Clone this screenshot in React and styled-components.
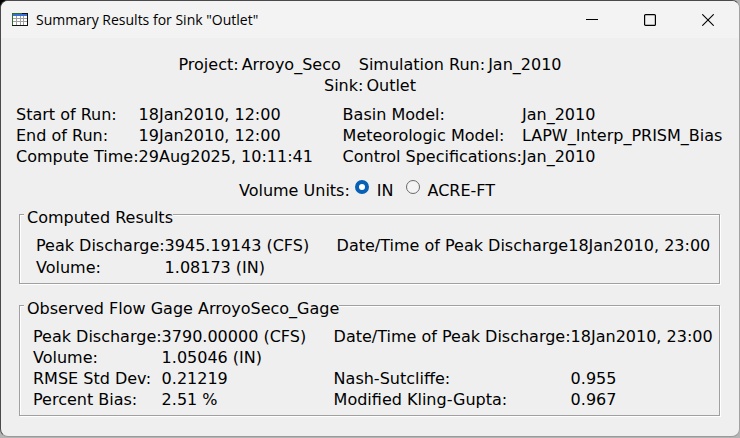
import React, { useState } from "react";
import styled, { createGlobalStyle } from "styled-components";

const GlobalStyle = createGlobalStyle`
  *, *::before, *::after {
    box-sizing: border-box;
  }
  body {
    margin: 0;
    background: #b4b4b4;
    color: #000;
    font-family: "DejaVu Sans", Verdana, sans-serif;
    font-size: 16px;
    line-height: 21px;
  }
`;

const Backdrop = styled.div`
  min-height: 100vh;
  display: flex;
  flex-direction: column;
  padding-bottom: 1px;
  background: linear-gradient(to right, #000 40px, transparent 40px) top / 100%
    20px no-repeat;
`;
const Window = styled.main`
  flex: 1;
  display: flex;
  flex-direction: column;
  overflow: hidden;
  border: 1px solid #4b494b;
  border-right-color: #a2a2a2;
  border-bottom-color: #9a9a9a;
  border-radius: 8px;
  background: #efefef;
`;
const TitleBar = styled.header`
  display: flex;
  align-items: center;
  height: 37px;
  padding: 0 2px 0 11px;
  background: #f3f3f3;
`;
const Title = styled.h1`
  flex: 1;
  margin: 0 0 0 8px;
  font-family: "Open Sans", "Noto Sans", sans-serif;
  font-size: 14px;
  font-weight: 400;
  white-space: nowrap;
`;
const WindowButton = styled.button`
  display: flex;
  align-items: center;
  justify-content: center;
  width: 58px;
  height: 37px;
  padding: 0;
  border: 0;
  background: transparent;
`;

const Content = styled.div`
  padding: 16px 15px;
`;
const Heading = styled.div`
  display: flex;
  justify-content: center;
  gap: 18px;
  white-space: nowrap;
`;
const Pair = styled.span`
  display: flex;
  gap: 3px;
`;
const Details = styled.dl`
  display: grid;
  grid-template-columns: ${({ $columns }) => $columns};
  row-gap: ${({ $rowGap }) => $rowGap || 0}px;
  margin: 0;
  white-space: nowrap;
`;
const RunDetails = styled(Details)`
  margin-top: 8px;
`;
const Term = styled.dt`
  grid-column: ${({ $column }) => $column};
`;
const Value = styled.dd`
  margin: 0;
`;

const Units = styled.div`
  display: flex;
  justify-content: center;
  margin-top: 13px;
  padding-right: 6px;
`;
const UnitLabel = styled.label`
  display: flex;
`;
const Radio = styled.input`
  appearance: none;
  width: 14px;
  height: 14px;
  margin: 0 8px 0 5px;
  border: 1px solid #6a6a6a;
  border-radius: 50%;
  background: #f4f4f4;

  &:checked {
    border: 4px solid #0560b6;
    background: #fff;
  }
  ${UnitLabel} + ${UnitLabel} & {
    margin-left: 12px;
  }
`;

const Group = styled.fieldset`
  min-width: 0;
  margin: ${({ $top }) => $top}px 4px 0 3px;
  padding: 13px 0 5px ${({ $inset }) => $inset}px;
  border: 1px solid #a0a0a0;
  box-shadow: inset 1px 1px 0 #fff, 1px 1px 0 #fff;
`;
const Legend = styled.legend`
  height: 15px;
  margin-left: ${({ $inset }) => 4 - $inset}px;
  padding: 0 0 0 3px;
  background: #efefef;
  white-space: nowrap;
`;

const TableIcon = () => (
  <svg width="16" height="14" viewBox="0 0 16 14" shapeRendering="crispEdges">
    <rect width="16" height="13" fill="#111" />
    <path d="M0 0H10V1H1V12H0Z" fill="#2f6b2a" />
    <rect x="1" y="1" width="14" height="2" fill="#3a6fd8" />
    <rect x="1" y="3" width="14" height="9" fill="#fff" />
    <path
      d="M1 5.5H15M1 8.5H15M4.5 3V12M8.5 3V12M11.5 3V12"
      stroke="#a0a0a0"
      fill="none"
    />
  </svg>
);

const units = ["IN", "ACRE-FT"];

const App = () => {
  const [unit, setUnit] = useState("IN");

  return (
    <>
      <GlobalStyle />
      <Backdrop>
        <Window>
          <TitleBar>
            <TableIcon />
            <Title>Summary Results for Sink "Outlet"</Title>
            <WindowButton type="button" aria-label="Minimize">
              <svg width="12" height="12" viewBox="0 0 12 12">
                <path d="M0 5.5H12" stroke="#000" />
              </svg>
            </WindowButton>
            <WindowButton type="button" aria-label="Maximize">
              <svg width="12" height="12" viewBox="0 0 12 12" fill="none">
                <rect
                  x="0.6"
                  y="0.6"
                  width="10.8"
                  height="10.8"
                  rx="1"
                  stroke="#000"
                  strokeWidth="1.2"
                />
              </svg>
            </WindowButton>
            <WindowButton type="button" aria-label="Close">
              <svg width="12" height="12" viewBox="0 0 12 12">
                <path
                  d="M0.3 0.3L11.7 11.7M11.7 0.3L0.3 11.7"
                  stroke="#000"
                  strokeWidth="1.1"
                />
              </svg>
            </WindowButton>
          </TitleBar>

          <Content>
            <Heading>
              <Pair>
                <span>Project:</span>
                <span>Arroyo_Seco</span>
              </Pair>
              <Pair>
                <span>Simulation Run:</span>
                <span>Jan_2010</span>
              </Pair>
            </Heading>
            <Heading>
              <Pair>
                <span>Sink:</span>
                <span>Outlet</span>
              </Pair>
            </Heading>

            <RunDetails $columns="max-content 204px max-content 1fr">
              <Term>Start of Run:</Term>
              <Value>18Jan2010, 12:00</Value>
              <Term>Basin Model:</Term>
              <Value>Jan_2010</Value>
              <Term>End of Run:</Term>
              <Value>19Jan2010, 12:00</Value>
              <Term>Meteorologic Model:</Term>
              <Value>LAPW_Interp_PRISM_Bias</Value>
              <Term>Compute Time:</Term>
              <Value>29Aug2025, 10:11:41</Value>
              <Term>Control Specifications:</Term>
              <Value>Jan_2010</Value>
            </RunDetails>

            <Units role="radiogroup" aria-labelledby="volume-units">
              <span id="volume-units">Volume Units:</span>
              {units.map((name) => (
                <UnitLabel key={name}>
                  <Radio
                    type="radio"
                    name="units"
                    value={name}
                    checked={unit === name}
                    onChange={() => setUnit(name)}
                  />
                  {name}
                </UnitLabel>
              ))}
            </Units>

            <Group $top={6} $inset={16}>
              <Legend $inset={16}>Computed Results</Legend>
              <Details $columns="max-content 172px max-content 1fr" $rowGap={1}>
                <Term>Peak Discharge:</Term>
                <Value>3945.19143 (CFS)</Value>
                <Term>Date/Time of Peak Discharge</Term>
                <Value>18Jan2010, 23:00</Value>
                <Term $column="1">Volume:</Term>
                <Value>1.08173 (IN)</Value>
              </Details>
            </Group>

            <Group $top={14} $inset={13}>
              <Legend $inset={13}>Observed Flow Gage ArroyoSeco_Gage</Legend>
              <Details $columns="max-content 172px max-content 1fr">
                <Term>Peak Discharge:</Term>
                <Value>3790.00000 (CFS)</Value>
                <Term>Date/Time of Peak Discharge:</Term>
                <Value>18Jan2010, 23:00</Value>
                <Term>Volume:</Term>
                <Value>1.05046 (IN)</Value>
                <Term $column="1">RMSE Std Dev:</Term>
                <Value>0.21219</Value>
                <Term>Nash-Sutcliffe:</Term>
                <Value>0.955</Value>
                <Term>Percent Bias:</Term>
                <Value>2.51 %</Value>
                <Term>Modified Kling-Gupta:</Term>
                <Value>0.967</Value>
              </Details>
            </Group>
          </Content>
        </Window>
      </Backdrop>
    </>
  );
};

export default App;
